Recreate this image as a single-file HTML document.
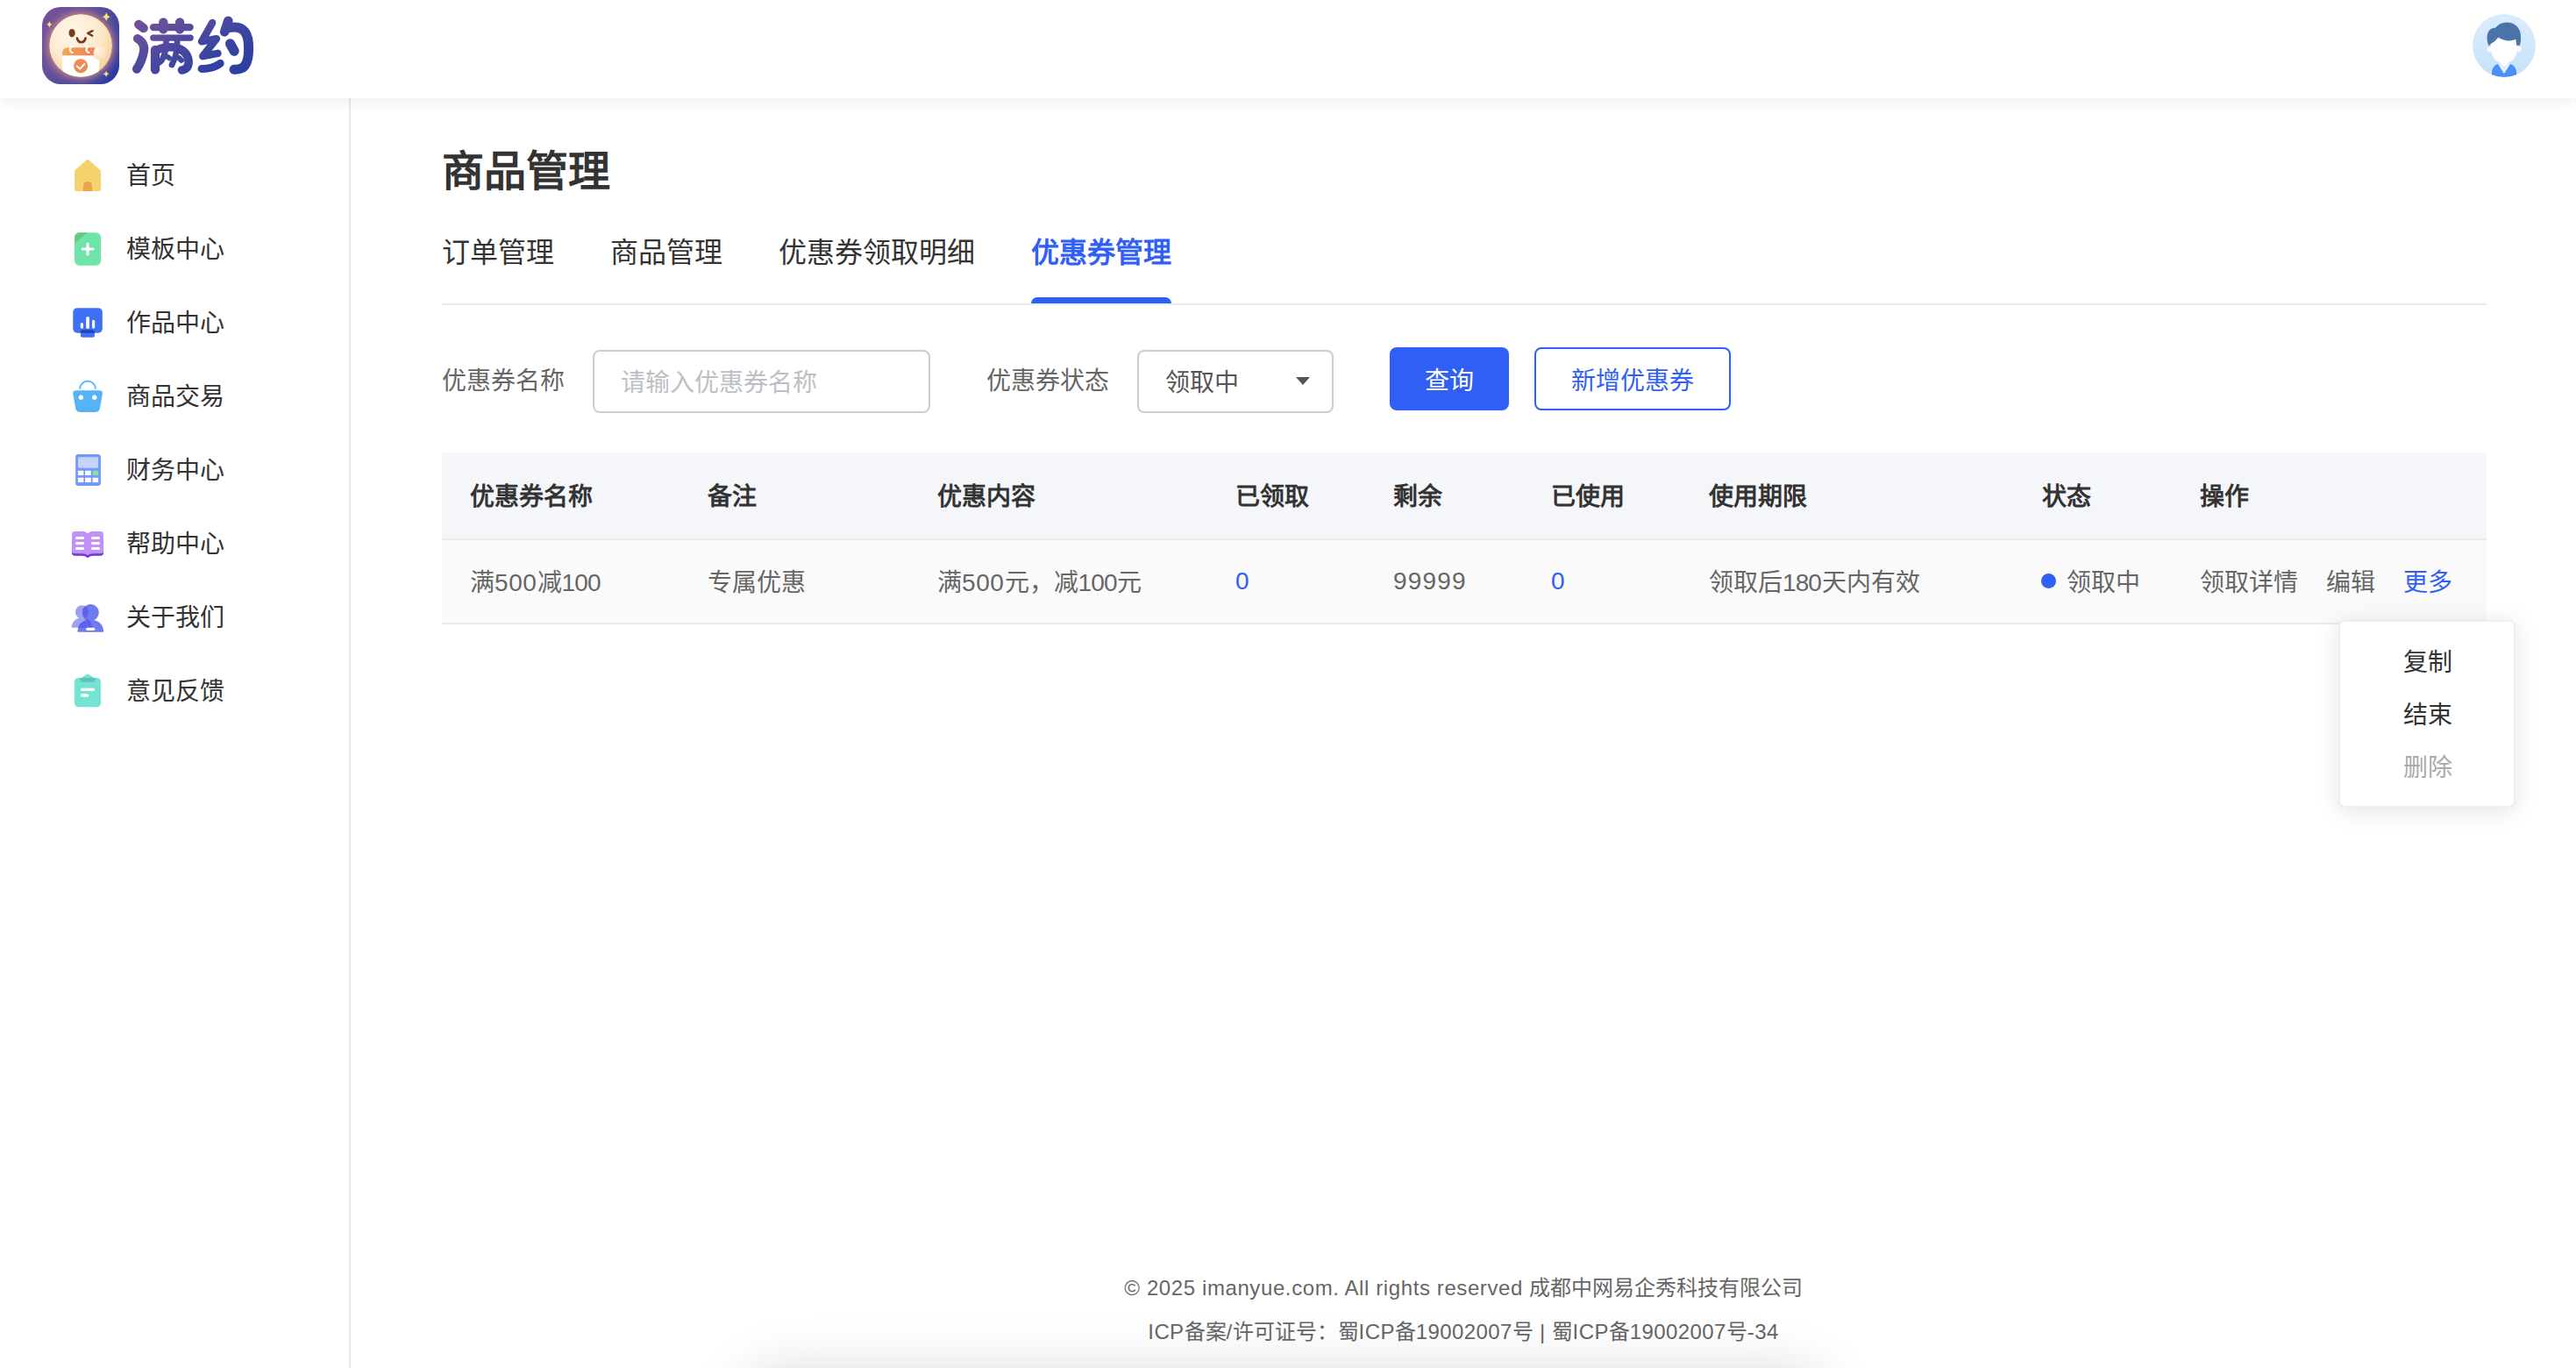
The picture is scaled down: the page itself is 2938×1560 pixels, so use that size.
<!DOCTYPE html>
<html lang="zh-CN">
<head>
<meta charset="utf-8">
<title>满约 - 商品管理</title>
<style>
*{box-sizing:border-box;margin:0;padding:0}
html,body{width:2938px;height:1560px;overflow:hidden;background:#fff}
body{font-family:"Liberation Sans",sans-serif;color:#333;position:relative;font-size:28px;line-height:1}
a{text-decoration:none;color:inherit}
ul{list-style:none}

/* ---------- header ---------- */
.header{position:absolute;left:0;top:0;width:2938px;height:112px;background:#fff;z-index:5;box-shadow:0 2px 16px rgba(0,0,0,.09)}
.logo{position:absolute;left:48px;top:8px;width:250px;height:88px}
.logo svg{display:block}
.avatar{position:absolute;left:2820px;top:16px;width:72px;height:72px}

/* ---------- sidebar ---------- */
.sidebar{position:absolute;left:0;top:112px;width:400px;height:1448px;background:#fff;border-right:2px solid #e5e8ec}
.nav{position:absolute;left:0;top:46px;width:398px}
.nav li{position:relative;height:84px;line-height:84px;padding-left:144px;padding-top:1px;font-size:28px;color:#333;white-space:nowrap}
.nav li svg{position:absolute;left:70px;top:12px;width:60px;height:60px}

/* ---------- main ---------- */
.main{position:absolute;left:400px;top:112px;width:2538px;height:1448px}
h1.title{position:absolute;left:104px;top:60px;font-size:48px;line-height:48px;font-weight:bold;color:#333;white-space:nowrap}
.tabs{position:absolute;left:104px;top:140px;width:2332px;height:96px;border-bottom:2px solid #e8ebf0}
.tabs a{position:absolute;top:20px;font-size:32px;line-height:32px;color:#333;white-space:nowrap}
.tabs a.on{color:#2f5ff5;font-weight:bold}
.tabs a.on:after{content:"";position:absolute;left:0;right:0;top:67px;height:7px;background:#2f5ff5;border-radius:7px 7px 0 0}

.filter{position:absolute;left:104px;top:284px;width:2332px;height:72px}
.filter label{position:absolute;top:25px;font-size:28px;line-height:28px;color:#666;white-space:nowrap}
.inp{position:absolute;top:3px;height:72px;border:2px solid #c9cdd4;border-radius:8px;background:#fff;font-size:28px;line-height:72px;padding-left:30px;white-space:nowrap}
.inp.ph{color:#bcc0c6}
.inp.sel{color:#555;line-height:71px}
.inp.sel i{position:absolute;right:25px;top:29px;width:0;height:0;border-left:8.5px solid transparent;border-right:8.5px solid transparent;border-top:9.5px solid #555}
.btn{position:absolute;top:0;height:72px;border-radius:8px;font-size:28px;line-height:77px;text-align:center;white-space:nowrap}
.btn.pri{background:#2f5ff5;color:#fff}
.btn.ghost{border:2px solid #2f5ff5;color:#2f5ff5;line-height:73px;background:#fff}

/* ---------- table ---------- */
table{position:absolute;left:104px;top:404px;width:2332px;border-collapse:collapse;table-layout:fixed}
th{height:99px;background:#f5f6fa;text-align:left;font-size:28px;font-weight:bold;color:#333;padding:3px 0 0 32px;white-space:nowrap;border-bottom:2px solid #e8ebf0}
td{height:96px;background:#fafafb;text-align:left;font-size:28px;color:#666;padding:3px 0 0 32px;white-space:nowrap;border-bottom:2px solid #e8ebf0}
td.num{padding-top:0}
td.num a{color:#2f5ff5}
.n{letter-spacing:1.15px}
.n5{letter-spacing:.6px}
.n1{letter-spacing:-.9px;margin-right:.9px}
.dot{display:inline-block;width:17px;height:17px;border-radius:50%;background:#2f5ff5;margin:0 12px 0 -1px;vertical-align:3px}
.ops a{margin-right:32px;color:#666}
.ops a.more{color:#2f5ff5;margin-right:0}

/* ---------- dropdown ---------- */
.pop{position:absolute;left:2267px;top:595px;width:202px;height:214px;background:#fff;border:2px solid #eceef7;border-radius:7px;box-shadow:0 4px 28px rgba(0,0,0,.11);z-index:3}
.pop li{position:absolute;left:72px;font-size:28px;line-height:28px;color:#333;white-space:nowrap}
.pop li.dis{color:#aaa}

/* ---------- footer ---------- */
.footer{position:absolute;left:0;top:1332px;width:2538px;text-align:center;color:#666;font-size:24px;line-height:50px;white-space:nowrap}
.footer .l{letter-spacing:.6px}
.footer .m{letter-spacing:.4px}
.dock-shadow{position:absolute;left:870px;top:1592px;width:1190px;height:60px;border-radius:30px;box-shadow:0 0 64px 30px rgba(0,0,0,.15);z-index:9}
</style>
</head>
<body>

<!-- ============ HEADER ============ -->
<div class="header">
  <div class="logo">
<svg style="position:absolute;left:0;top:0" width="88" height="88" viewBox="105 105 1157 1157">
  <defs>
    <linearGradient id="lgbg" x1="0" y1=".15" x2="1" y2=".75"><stop offset="0" stop-color="#72509a"/><stop offset=".45" stop-color="#5f4f99"/><stop offset=".8" stop-color="#3d459d"/><stop offset="1" stop-color="#2a3ca0"/></linearGradient>
    <radialGradient id="lgglow" cx="685" cy="685" r="640" gradientUnits="userSpaceOnUse"><stop offset=".7" stop-color="#de9680" stop-opacity=".8"/><stop offset=".79" stop-color="#c07f89" stop-opacity=".5"/><stop offset=".9" stop-color="#9a6a95" stop-opacity=".18"/><stop offset="1" stop-color="#8a5f9a" stop-opacity="0"/></radialGradient>
    <radialGradient id="lgmoon" cx="560" cy="480" r="700" gradientUnits="userSpaceOnUse"><stop offset="0" stop-color="#fff6e8"/><stop offset=".55" stop-color="#fdebd0"/><stop offset="1" stop-color="#f7d29d"/></radialGradient>
    <linearGradient id="lgcal" x1="0" y1="0" x2="1" y2="0"><stop offset="0" stop-color="#f3a552"/><stop offset="1" stop-color="#ee8259"/></linearGradient>
    <radialGradient id="lghand" cx="940" cy="750" r="150" gradientUnits="userSpaceOnUse"><stop offset="0" stop-color="#fff6e8"/><stop offset="1" stop-color="#f9ddb6"/></radialGradient>
    <clipPath id="lgclip"><circle cx="685" cy="683" r="470"/></clipPath>
    <clipPath id="lgbox"><rect x="105" y="105" width="1157" height="1157" rx="280"/></clipPath>
  </defs>
  <rect x="105" y="105" width="1157" height="1157" rx="280" fill="url(#lgbg)"/>
  <g clip-path="url(#lgbox)"><circle cx="685" cy="685" r="640" fill="url(#lgglow)"/></g>
  <circle cx="685" cy="683" r="470" fill="url(#lgmoon)"/>
  <ellipse cx="553" cy="495" rx="47" ry="62" fill="#7a3a22"/>
  <path d="M862 462 L790 498 L858 536" fill="none" stroke="#7a3a22" stroke-width="32" stroke-linecap="round" stroke-linejoin="round"/>
  <path d="M630 574 C648 652 738 652 756 574" fill="none" stroke="#7a3a22" stroke-width="36" stroke-linecap="round"/>
  <g clip-path="url(#lgclip)">
    <path d="M408 800 H963 V1015 Q963 1152 826 1152 H545 Q408 1152 408 1015Z" fill="#fff"/>
    <path d="M408 830 V800 Q408 712 500 712 H895 V830Z" fill="url(#lgcal)"/>
  </g>
  <path d="M562 696 A38 46 0 1 0 562 788 M807 696 A38 46 0 1 0 807 788" fill="none" stroke="#fff" stroke-width="28" stroke-linecap="round"/>
  <circle cx="685" cy="990" r="106" fill="#ee8a58"/>
  <path d="M628 992 L672 1034 L742 958" fill="none" stroke="#fff" stroke-width="24" stroke-linecap="round" stroke-linejoin="round"/>
  <circle cx="978" cy="796" r="108" fill="#f3cf9f" opacity=".55"/><circle cx="982" cy="790" r="104" fill="url(#lghand)"/>
  <g fill="#fbe46c">
    <path d="M1068 182 Q1078 240 1128 252 Q1078 264 1068 322 Q1058 264 1008 252 Q1058 240 1068 182Z"/>
    <path d="M215 318 Q222 358 260 366 Q222 374 215 414 Q208 374 170 366 Q208 358 215 318Z"/>
    <path d="M1066 1062 Q1073 1100 1110 1108 Q1073 1116 1066 1152 Q1059 1116 1022 1108 Q1059 1100 1066 1062Z"/>
  </g>
</svg>
<svg style="position:absolute;left:92px;top:0" width="160" height="88" viewBox="0 0 2487 1368">
  <defs><linearGradient id="ltg" x1="200" y1="200" x2="950" y2="1500" gradientUnits="userSpaceOnUse"><stop offset="0" stop-color="#73509a"/><stop offset=".3" stop-color="#624e9b"/><stop offset=".55" stop-color="#4a489f"/><stop offset=".8" stop-color="#3b45a1"/><stop offset="1" stop-color="#3040a1"/></linearGradient></defs>
  <g fill="none" stroke="url(#ltg)" stroke-linecap="round" stroke-linejoin="round">
    <!-- 满 : 氵 -->
    <path d="M283 310 L368 375" stroke-width="160"/>
    <path d="M262 560 Q400 640 372 790 Q340 960 248 1100" stroke-width="156"/>
    <!-- 满 : 艹 -->
    <path d="M545 360 H1190" stroke-width="130"/>
    <path d="M720 270 V395 M1012 270 V395" stroke-width="160"/>
    <path d="M540 545 H1200" stroke-width="112"/>
    <!-- 满 : 两 -->
    <path d="M575 760 V1110" stroke-width="160"/>
    <path d="M770 560 Q775 800 700 930 Q660 990 600 1000" stroke-width="105"/>
    <path d="M965 560 Q975 800 900 960 Q880 1000 870 1025" stroke-width="105"/>
    <path d="M582 772 Q740 694 930 716 Q1150 770 1168 960 Q1172 1100 1048 1118" stroke-width="148"/>
    <path d="M790 880 L822 905 M1000 905 L1040 945" stroke-width="95"/>
    <!-- 约 : 纟 -->
    <path d="M1588 280 L1400 612 L1662 562 L1418 872 L1685 822" stroke-width="132"/>
    <path d="M1400 1095 Q1600 1095 1728 1000" stroke-width="140"/>
    <!-- 约 : 勺 -->
    <path d="M1870 245 L1805 440" stroke-width="165"/>
    <path d="M1880 368 Q2200 300 2228 640 Q2250 1000 2120 1080 Q2060 1112 1975 1108" stroke-width="172"/>
    <path d="M1905 650 L1975 780" stroke-width="175"/>
  </g>
</svg>
</div>
  <div class="avatar">
<svg width="72" height="72" viewBox="630 168 760 760" style="display:block">
  <defs>
    <linearGradient id="avbg" x1="0" y1="0" x2="0" y2="1"><stop offset="0" stop-color="#d9ecfe"/><stop offset="1" stop-color="#c8e2fb"/></linearGradient>
    <clipPath id="avc"><circle cx="1010" cy="548" r="380"/></clipPath>
  </defs>
  <circle cx="1010" cy="548" r="380" fill="url(#avbg)"/>
  <g clip-path="url(#avc)">
    <path d="M862 940 V880 Q862 800 935 768 L1010 880 L1085 768 Q1160 800 1160 880 V940Z" fill="#4a91f6"/>
    <path d="M960 700 H1062 V768 L1085 768 L1010 885 L935 768 L960 768Z" fill="#e3f1ff"/>
    <path d="M965 700 H1058 V760 L1010 800 L965 760Z" fill="#fff"/>
    <circle cx="838" cy="595" r="30" fill="#fff"/><circle cx="1188" cy="588" r="30" fill="#fff"/>
    <path d="M852 470 H1170 V600 Q1150 750 1010 752 Q870 750 852 600Z" fill="#fff"/>
    <path d="M826 552 Q790 470 812 400 Q840 330 905 335 Q960 265 1050 268 Q1160 275 1200 370 Q1225 450 1200 545 L1160 545 L1152 472 Q1050 520 940 448 Q900 505 850 528 Z" fill="#4a74a8"/>
  </g>
</svg>
</div>
</div>

<!-- ============ SIDEBAR ============ -->
<div class="sidebar">
  <ul class="nav">
    <li><svg viewBox="0 0 1368 1368"><path d="M663 282 Q685 262 707 282 L1012 548 Q1027 562 1027 585 L1027 1060 Q1027 1095 992 1095 L378 1095 Q343 1095 343 1060 L343 585 Q343 562 358 548 Z" fill="#f4d26e"/><path d="M570 1095 L570 955 A114 114 0 0 1 798 955 L798 1095 Z" fill="#eda54c"/></svg>首页</li>
    <li><svg viewBox="0 0 1368 1368"><rect x="343" y="257" width="684" height="852" rx="125" fill="#6ee4a8"/><path d="M343 535 L343 382 A125 125 0 0 1 468 257 L675 257 Z" fill="#67c97f"/><path d="M550 683 H820 M685 548 V818" stroke="#fff" stroke-width="72" stroke-linecap="round" fill="none"/></svg>模板中心</li>
    <li><svg viewBox="0 0 1368 1368"><rect x="303" y="300" width="765" height="650" rx="110" fill="#3f70f5"/><rect x="500" y="870" width="365" height="195" rx="45" fill="#3f70f5"/><path d="M545 870 H820 Q865 870 865 915 V950 H500 V915 Q500 870 545 870Z" fill="#1f45b5"/><path d="M533 722 V800 M835 645 V800" stroke="#fff" stroke-width="74" stroke-linecap="round"/><path d="M685 568 V800" stroke="#fff" stroke-width="84" stroke-linecap="round"/></svg>作品中心</li>
    <li><svg viewBox="0 0 1368 1368"><path d="M480 495 A205 205 0 0 1 890 495" fill="none" stroke="#6cc1fa" stroke-width="50"/><path d="M385 530 H985 Q1080 530 1068 625 L1000 1000 Q983 1092 890 1092 H480 Q387 1092 370 1000 L302 625 Q290 530 385 530Z" fill="#55b3f8"/><circle cx="510" cy="712" r="60" fill="#fff"/><circle cx="860" cy="712" r="60" fill="#fff"/></svg>商品交易</li>
    <li><svg viewBox="0 0 1368 1368"><rect x="368" y="272" width="656" height="824" rx="70" fill="#7499f7"/><rect x="432" y="345" width="528" height="286" rx="38" fill="#c6d4fc"/><g fill="#fff"><rect x="432" y="702" width="146" height="120" rx="8"/><rect x="618" y="702" width="152" height="120" rx="8"/><rect x="432" y="886" width="146" height="120" rx="8"/><rect x="618" y="886" width="152" height="120" rx="8"/><rect x="814" y="886" width="146" height="120" rx="8"/></g><rect x="814" y="702" width="146" height="120" rx="8" fill="#82e59a"/></svg>财务中心</li>
    <li><svg viewBox="0 0 1368 1368"><path d="M275 560 H1093 V925 Q1093 1000 1018 1000 H840 Q740 1000 683 1052 Q626 1000 526 1000 H350 Q275 1000 275 925Z" fill="#7136d0"/><path d="M350 366 H560 Q630 366 683 415 Q736 366 806 366 H1018 Q1093 366 1093 441 V865 Q1093 940 1018 940 H840 Q740 940 683 985 Q626 940 526 940 H350 Q275 940 275 865 V441 Q275 366 350 366Z" fill="#c191f8"/><path d="M400 535 H560 M400 672 H560 M400 810 H560 M810 535 H968 M810 672 H968 M810 810 H968" stroke="#fff" stroke-width="70" stroke-linecap="round"/></svg>帮助中心</li>
    <li><svg viewBox="0 0 1368 1368"><defs><clipPath id="pf"><circle cx="760" cy="560" r="216"/><path d="M420 1065 Q420 1020 430 975 Q480 760 760 735 Q1040 760 1090 975 Q1100 1020 1100 1040 Q1100 1065 1075 1065Z"/></clipPath></defs><g fill="#9aa2f1"><circle cx="535" cy="545" r="172"/><path d="M270 950 Q262 920 275 880 Q330 700 535 690 Q740 700 795 880 Q808 920 800 950Z"/></g><g fill="#6f7cee"><circle cx="760" cy="560" r="216"/><path d="M445 1065 Q415 1065 420 1030 Q455 770 760 735 Q1065 770 1100 1030 Q1105 1065 1075 1065Z"/></g><g clip-path="url(#pf)" fill="#625eee"><circle cx="535" cy="545" r="172"/><path d="M270 950 Q262 920 275 880 Q330 700 535 690 Q740 700 795 880 Q808 920 800 950Z"/></g><rect x="640" y="950" width="236" height="76" rx="38" fill="#fff"/></svg>关于我们</li>
    <li><svg viewBox="0 0 1368 1368"><path d="M640 262 Q685 230 730 262 L880 360 H490Z" fill="#73e4d2"/><rect x="343" y="340" width="680" height="760" rx="95" fill="#73e4d2"/><path d="M485 342 H885 V395 Q885 452 828 452 H542 Q485 452 485 395Z" fill="#5fc2b6"/><path d="M538 648 H832 M538 798 H678" stroke="#fff" stroke-width="76" stroke-linecap="round"/></svg>意见反馈</li>
  </ul>
</div>

<!-- ============ MAIN ============ -->
<div class="main">
  <h1 class="title">商品管理</h1>

  <div class="tabs">
    <a style="left:0">订单管理</a>
    <a style="left:192px">商品管理</a>
    <a style="left:384px">优惠券领取明细</a>
    <a class="on" style="left:672px">优惠券管理</a>
  </div>

  <div class="filter">
    <label style="left:0">优惠券名称</label>
    <div class="inp ph" style="left:172px;width:385px">请输入优惠券名称</div>
    <label style="left:621px">优惠券状态</label>
    <div class="inp sel" style="left:793px;width:224px">领取中<i></i></div>
    <div class="btn pri" style="left:1081px;width:136px">查询</div>
    <div class="btn ghost" style="left:1246px;width:224px">新增优惠券</div>
  </div>

  <table>
    <colgroup>
      <col style="width:271px"><col style="width:262px"><col style="width:340px"><col style="width:180px"><col style="width:180px"><col style="width:180px"><col style="width:380px"><col style="width:180px"><col style="width:359px">
    </colgroup>
    <thead>
      <tr><th>优惠券名称</th><th>备注</th><th>优惠内容</th><th>已领取</th><th>剩余</th><th>已使用</th><th>使用期限</th><th>状态</th><th>操作</th></tr>
    </thead>
    <tbody>
      <tr>
        <td>满<span class="n5">500</span>减<span class="n1">100</span></td>
        <td>专属优惠</td>
        <td>满<span class="n5">500</span>元，减<span class="n1">100</span>元</td>
        <td class="num"><a>0</a></td>
        <td class="num"><span class="n">99999</span></td>
        <td class="num"><a>0</a></td>
        <td>领取后<span class="n1">180</span>天内有效</td>
        <td><span class="dot"></span>领取中</td>
        <td class="ops"><a>领取详情</a><a>编辑</a><a class="more">更多</a></td>
      </tr>
    </tbody>
  </table>

  <ul class="pop">
    <li style="top:33px">复制</li>
    <li style="top:93px">结束</li>
    <li class="dis" style="top:153px">删除</li>
  </ul>

  <div class="footer">
    <p><span class="l">© 2025 imanyue.com. All rights reserved</span> 成都中网易企秀科技有限公司</p>
    <p><span class="m">ICP</span>备案<span class="m">/</span>许可证号：蜀<span class="m">ICP</span>备<span class="m">19002007</span>号<span class="m"> | </span>蜀<span class="m">ICP</span>备<span class="m">19002007</span>号<span class="m">-34</span></p>
  </div>
</div>

<div class="dock-shadow"></div>

</body>
</html>
